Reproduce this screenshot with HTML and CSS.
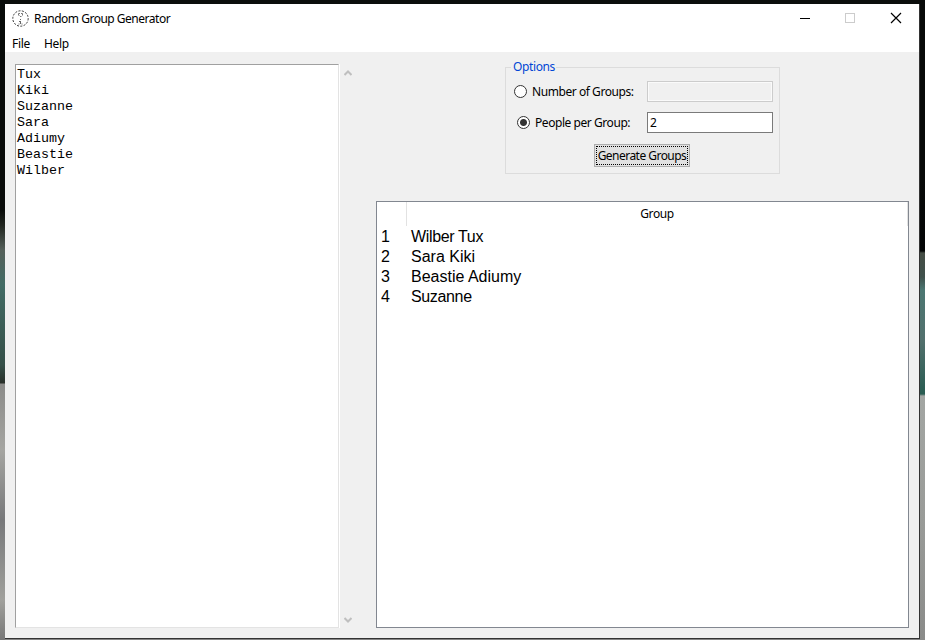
FILE: index.html
```html
<!DOCTYPE html>
<html lang="en">
<head>
<meta charset="utf-8">
<title>Random Group Generator</title>
<link rel="stylesheet" href="styles.css">
</head>
<body>
<div class="window">
  <header class="titlebar">
    <svg class="app-icon" width="17" height="17" viewBox="0 0 17 17" fill="none" stroke="#333" stroke-width="1">
      <circle cx="8.5" cy="8.5" r="7.7" stroke-dasharray="2 1.4"/>
      <path d="M6.500 5V3.500H8M9 3.500H10.500V5.500M9.500 6.500H8M6.500 5.500H7.500" stroke="#777"/>
      <path d="M8 9.500h1M7 11.500h2M8.500 12v2M6.500 14h1M9.500 14h1" stroke="#666"/>
    </svg>
    <h1 class="title"><span>Random Group Generator</span></h1>
    <svg class="controls" width="106" height="14" viewBox="0 0 106 14" fill="none" shape-rendering="crispEdges">
      <path d="M0 6.500H10" stroke="#000"/>
      <rect x="45.500" y="1.500" width="9" height="9" stroke="#ccc"/>
      <path d="M91 1L101 11M101 1L91 11" stroke="#000" stroke-width="1.200" shape-rendering="auto"/>
    </svg>
  </header>
  <nav class="menu"><span class="file">File</span><span class="help">Help</span></nav>
  <main class="content">
    <pre class="names">Tux
Kiki
Suzanne
Sara
Adiumy
Beastie
Wilber</pre>
    <div class="scrollbar">
      <svg width="8" height="6" viewBox="0 0 8 6"><path d="M.5 5L4 1.500L7.500 5" fill="none" stroke="#bfbfbf" stroke-width="2"/></svg>
      <svg width="8" height="6" viewBox="0 0 8 6"><path d="M.5 1L4 4.500L7.500 1" fill="none" stroke="#bfbfbf" stroke-width="2"/></svg>
    </div>
    <section class="right">
      <div class="options">
        <div class="legend"><span>Options</span></div>
        <div class="row">
          <i class="radio"></i><span class="label number">Number of Groups:</span><span class="field disabled"></span>
        </div>
        <div class="row second">
          <i class="radio on"></i><span class="label people">People per Group:</span><span class="field">2</span>
        </div>
        <button class="generate"><span>Generate Groups</span></button>
      </div>
      <div class="table">
        <div class="head"><span class="index"></span><span class="group">Group</span></div>
        <div class="record"><span class="index">1</span><span class="tight">Wilber Tux</span></div>
        <div class="record"><span class="index">2</span><span>Sara Kiki</span></div>
        <div class="record"><span class="index">3</span><span>Beastie Adiumy</span></div>
        <div class="record"><span class="index">4</span><span class="tight">Suzanne</span></div>
      </div>
    </section>
  </main>
</div>
</body>
</html>
```
FILE: styles.css
```css
* { box-sizing: border-box; }
html { height: 100%; }
body {
  margin: 0;
  height: 640px;
  padding: 4px 6px 2px 5px;
  overflow: hidden;
  font: 12px/16px "Noto Sans", "Open Sans", sans-serif;
  color: #000;
  background:
    linear-gradient(#080b09 0 210px, #20251f 225px, #55605a 250px, #426c65 285px, #354f48 365px, #29302a 383px, #8b8b89 384px, #a5a5a1 450px, #77787a 520px, #a0a09c 600px, #777 640px) 0 0 / 5px 640px no-repeat,
    linear-gradient(#080a09 0 180px, #030506 251px, #454d45 253px, #3f514c 277px, #4c7772 290px, #52706d 340px, #285c51 394px, #a3a6a3 396px, #999b98 520px, #8a8b89 640px) 920px 0 / 5px 640px no-repeat,
    linear-gradient(#0b0e0c 0 4px, #333 4px 639px, #858585 639px);
}
.window { width: 914px; height: 634px; background: #f0f0f0; }
.titlebar { display: flex; height: 30px; padding: 6px 0 0 7px; background: #fff; }
.app-icon { flex: none; }
.title { margin: 1px 0 0 5px; width: 766px; font: inherit; letter-spacing: -.49px; white-space: nowrap; }
.controls { margin-top: 2px; }
.menu { display: flex; gap: 14px; height: 18px; padding: 2px 0 0 7px; background: #fff; letter-spacing: -.3px; }
.file { width: 18px; }
.content { display: flex; height: 586px; padding: 12px 10px 10px; }
.names {
  width: 324px;
  height: 564px;
  margin: 0;
  padding: 2px 1px;
  background: #fff;
  border: 1px solid #e3e3e3;
  border-top-color: #a0a0a0;
  border-left-color: #a0a0a0;
  box-shadow: 1px 0 #fff;
  font: 13.333px/16px "Liberation Mono", monospace;
}
.scrollbar { display: flex; flex-direction: column; justify-content: space-between; width: 37px; padding: 6px 0 5px 4.5px; }
.scrollbar svg { display: block; }
.right { width: 533px; display: flex; flex-direction: column; }
.options { width: 275px; height: 107px; margin: 3px 0 27px 129px; border: 1px solid #dcdcdc; }
.legend { height: 13px; margin-top: -9px; padding-left: 5px; color: #0046d5; }
.legend span { display: inline-block; width: 45px; padding-left: 2px; background: #f0f0f0; letter-spacing: -.38px; }
.row { display: flex; align-items: center; height: 21px; margin: 9px 6px 0 8px; }
.row.second { margin: 10px 6px 0 11px; }
.radio { flex: none; width: 13px; height: 13px; border: 1px solid #333; border-radius: 50%; background: #fff; }
.radio.on { background: radial-gradient(circle, #333 0 3px, #fff 4px); }
.label { margin-left: 5px; white-space: nowrap; letter-spacing: -.44px; }
.number { width: 115px; }
.people { width: 112px; }
.field { width: 126px; height: 21px; padding: 2px; border: 1px solid #7a7a7a; background: #fff; }
.field.disabled { border-color: #ccc; background: #f0f0f0; box-shadow: inset 0 0 0 1px #fafafa; }
.generate {
  display: block;
  width: 96px;
  height: 23px;
  margin: 11px 0 0 88px;
  padding: 1px;
  border: 1px solid #adadad;
  background: #e1e1e1;
  font: inherit;
  letter-spacing: -.53px;
  color: #000;
  white-space: nowrap;
}
.generate span { display: flex; justify-content: center; align-items: center; height: 19px; border: 1px dotted #000; }
.table { width: 533px; height: 427px; border: 1px solid #828790; background: #fff; font: 16px/20px "Liberation Sans", sans-serif; }
.head { display: flex; height: 24px; margin-bottom: 1px; border-right: 1px solid #e2e2e2; font: 12px/23px "Noto Sans", sans-serif; letter-spacing: -.4px; }
.head .index { width: 30px; padding: 0; border-right: 1px solid #e2e2e2; }
.group { flex: 1; text-align: center; }
.record { display: flex; height: 20px; }
.index { width: 34px; padding-left: 4px; }
.tight { letter-spacing: -.35px; }
```
